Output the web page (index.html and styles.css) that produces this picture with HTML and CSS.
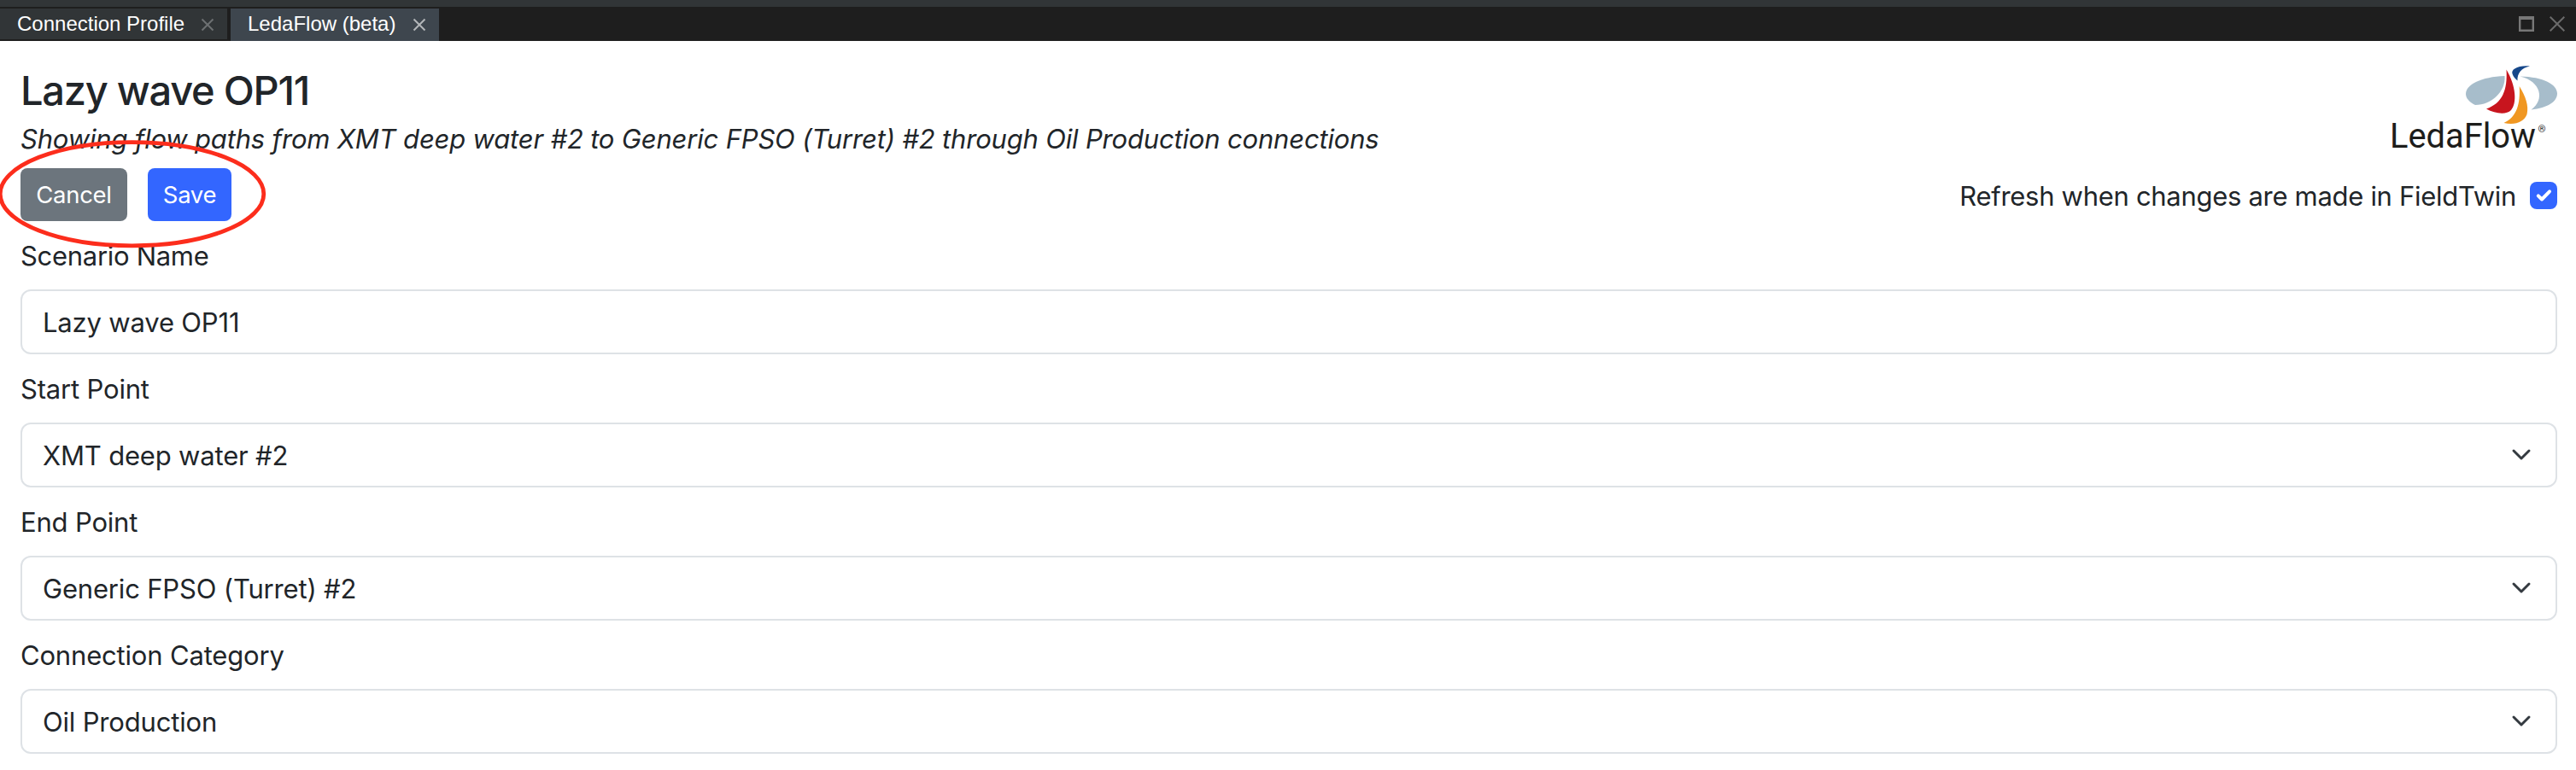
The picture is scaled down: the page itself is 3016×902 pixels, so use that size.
FILE: index.html
```html
<!DOCTYPE html>
<html lang="en">
<head>
<meta charset="utf-8">
<title>LedaFlow (beta)</title>
<link rel="stylesheet" href="styles.css">
</head>
<body>
<header class="tabbar">
  <div class="tab tab-inactive"><span class="tab-text tab-text-profile">Connection Profile</span>
    <svg class="tab-close" viewBox="0 0 16 16"><path d="M1.5 1.5l13 13M14.5 1.5l-13 13"/></svg></div>
  <div class="tab tab-active"><span class="tab-text">LedaFlow (beta)</span>
    <svg class="tab-close" viewBox="0 0 16 16"><path d="M1.5 1.5l13 13M14.5 1.5l-13 13"/></svg></div>
  <div class="window-controls">
    <svg width="18" height="18" viewBox="0 0 18 18"><path d="M1.2 2h15.6v14.8H1.2z" fill="none" stroke="#777" stroke-width="2.4"/><path d="M0 0h18v4H0z" fill="#777"/></svg>
    <svg width="18" height="18" viewBox="0 0 18 18"><path d="M.7.7l16.6 16.6M17.3.7L.7 17.3" fill="none" stroke="#6b6b6b" stroke-width="2"/></svg>
  </div>
</header>
<main class="panel">
  <div class="heading">
    <div>
      <h1 class="title">Lazy wave OP11</h1>
      <p class="subtitle">Showing flow paths from XMT deep water #2 to Generic FPSO (Turret) #2 through Oil Production connections</p>
    </div>
    <svg class="logo" width="204" height="110" viewBox="2790 76 204 110">
      <path fill="#a7bdcb" d="M2932.5 89C2905 90 2887 99 2887 110C2887 115 2891 119.500 2898 123C2917 123 2934 107 2932.500 89Z"/>
      <path fill="#a7bdcb" d="M2950.500 89.500C2978 90 2994 99 2994 109.500C2994 119 2983 126.500 2963.500 128.500C2980 117 2975 95 2950.500 89.500Z"/>
      <path fill="#c8151e" d="M2934.500 81.500C2936 105 2930 121 2911 127.500C2921 133 2934 135 2940 129C2947 121 2946 101 2934.500 81.500Z"/>
      <path fill="#f09722" d="M2949.700 101C2951 121 2947 137 2931.500 144C2945 147 2955 143 2958.500 134C2961 124 2957 113 2949.700 101Z"/>
      <path fill="#16478a" d="M2962 77.500C2949 76 2939 81 2941.700 87C2942.500 90 2945 92 2947.500 94.500C2947 86 2952 79.500 2962 77.500Z"/>
      <text class="logo-text" x="2798" y="172.500" textLength="171" lengthAdjust="spacingAndGlyphs">LedaFlow</text>
      <text class="logo-mark" x="2971.500" y="154.500" textLength="9" lengthAdjust="spacingAndGlyphs">®</text>
    </svg>
  </div>
  <div class="actions">
    <div class="buttons">
      <button class="btn btn-cancel">Cancel</button>
      <button class="btn btn-save">Save</button>
      <svg class="annotation" width="316" height="132" viewBox="-2 161 316 132"><ellipse cx="154.500" cy="227.200" rx="154.300" ry="60.600"/></svg>
    </div>
    <div class="refresh"><span class="refresh-text">Refresh when changes are made in FieldTwin</span>
      <svg class="checkbox" viewBox="0 0 32 32"><rect width="32" height="32" rx="8"/><path d="M9.800 16.300l4.200 4.200 9-9.200"/></svg>
    </div>
  </div>
  <div class="form">
    <div class="label l-scenario">Scenario Name</div>
    <div class="field"><span>Lazy wave OP11</span></div>
    <div class="label">Start Point</div>
    <div class="field"><span>XMT deep water #2</span><svg class="chevron" viewBox="0 0 24 16"><path d="M3 3l9 9 9-9"/></svg></div>
    <div class="label">End Point</div>
    <div class="field"><span>Generic FPSO (Turret) #2</span><svg class="chevron" viewBox="0 0 24 16"><path d="M3 3l9 9 9-9"/></svg></div>
    <div class="label">Connection Category</div>
    <div class="field"><span>Oil Production</span><svg class="chevron" viewBox="0 0 24 16"><path d="M3 3l9 9 9-9"/></svg></div>
  </div>
</main>
</body>
</html>
```
FILE: styles.css
```css
* { box-sizing: border-box; }
body { margin: 0; background: #fff; color: #212529; font-family: Inter, "Liberation Sans", sans-serif; font-size: 31px; line-height: 48px; letter-spacing: -.18px; overflow: hidden; }
.tabbar { display: flex; height: 48px; gap: 4px; padding-top: 2px; border-top: 8px solid #313537; background: #1e1e1e; font-family: "Liberation Sans", Arial, sans-serif; font-size: 24px; line-height: 36px; letter-spacing: 0; color: #fff; }
.tab { display: flex; align-items: flex-start; justify-content: space-between; }
.tab-inactive { width: 266px; height: 36px; padding: 0 15px 0 20px; background: #313537; }
.tab-active { width: 244px; height: 38px; padding: 0 15px 0 20px; background: #3e464e; }
.tab-close { width: 16px; height: 16px; margin-top: 11px; fill: none; stroke: #6d7072; stroke-width: 2; }
.tab-active .tab-close { stroke: #b3b6b9; }
.window-controls { display: flex; gap: 18px; margin: 9px 13px 0 auto; }
.panel { padding: 28px 22px 0 24px; }
.heading { display: flex; justify-content: space-between; height: 110px; }
.title { margin: 0; padding-top: 1px; font-size: 47px; font-weight: 500; line-height: 58px; letter-spacing: -1.25px; }
.subtitle { margin: 4px 0 0; font-style: italic; white-space: nowrap; }
.logo { display: block; overflow: visible; }
.logo-text { font: 40px Roboto, sans-serif; letter-spacing: 0; fill: #1d1d1b; }
.logo-mark { font: 11px Roboto, sans-serif; letter-spacing: 0; fill: #1d1d1b; }
.actions { display: flex; justify-content: space-between; align-items: flex-start; height: 89px; padding-top: 11px; }
.buttons { position: relative; display: flex; gap: 24px; }
.btn { height: 62px; padding: 0; border: 0; border-radius: 8px; color: #fff; font-family: Inter, sans-serif; font-size: 27.500px; line-height: 62px; letter-spacing: -.3px; }
.btn-cancel { width: 125px; background: #6c757d; }
.btn-save { width: 98px; background: #3366ff; }
.annotation { position: absolute; left: -26px; top: -36px; fill: none; stroke: #fc2d1c; stroke-width: 4.800; }
.refresh { display: flex; gap: 16px; padding-top: 8px; }
.refresh-text { padding-top: 1px; letter-spacing: -.3px; }
.checkbox { width: 32px; height: 32px; margin-top: 8px; fill: #3366ff; }
.checkbox path { fill: none; stroke: #fff; stroke-width: 4; stroke-linecap: round; stroke-linejoin: round; }
.label { height: 48px; padding-top: 1px; }
.l-scenario { letter-spacing: -.3px; }
.field { display: flex; justify-content: space-between; align-items: center; height: 76px; margin: 16px 0; padding: 0 28px 0 24px; border: 2px solid #dee2e6; border-radius: 12px; }
.field span { padding-top: 1px; }
.chevron { width: 24px; height: 16px; fill: none; stroke: #343a40; stroke-width: 3; stroke-linecap: round; stroke-linejoin: round; }
```
